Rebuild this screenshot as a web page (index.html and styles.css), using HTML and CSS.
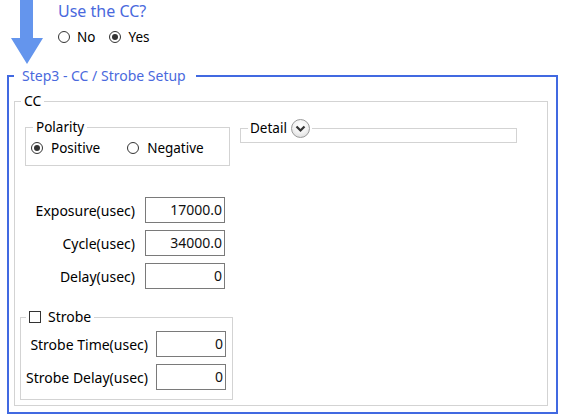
FILE: index.html
```html
<!DOCTYPE html>
<html>
<head>
<meta charset="utf-8">
<link rel="stylesheet" href="styles.css">
</head>
<body>
<div class="top">
  <svg class="arrow" width="32" height="64" viewBox="0 0 32 64">
    <polygon points="9,0 22,0 22,38 32,38 16,64 0,38 9,38" fill="#6495ED"/>
  </svg>
  <div class="question">
    <div class="q-title">Use the CC?</div>
    <div class="radios">
      <label class="opt"><span class="radio"></span>No</label>
      <label class="opt"><span class="radio on"></span>Yes</label>
    </div>
  </div>
</div>
<fieldset class="step">
  <legend class="step-legend">Step3 - CC / Strobe Setup</legend>
  <fieldset class="cc">
    <legend class="cc-legend">CC</legend>
    <div class="cc-body">
      <div class="cc-top">
        <fieldset class="polarity">
          <legend class="pol-legend">Polarity</legend>
          <div class="pol-body">
            <label class="opt"><span class="radio on"></span>Positive</label>
            <label class="opt neg"><span class="radio"></span>Negative</label>
          </div>
        </fieldset>
        <fieldset class="detail">
          <legend class="det-legend">Detail <span class="chev"><svg width="11" height="8" viewBox="0 0 11 8"><polyline points="1.5,1.5 5.5,5.5 9.5,1.5" fill="none" stroke="#333" stroke-width="2.2"/></svg></span></legend>
        </fieldset>
      </div>
      <div class="rows">
        <div class="row"><span class="lbl">Exposure(usec)</span><span class="field">17000.0</span></div>
        <div class="row"><span class="lbl">Cycle(usec)</span><span class="field">34000.0</span></div>
        <div class="row"><span class="lbl">Delay(usec)</span><span class="field">0</span></div>
      </div>
      <fieldset class="strobe">
        <legend class="str-legend"><span class="check"></span>Strobe</legend>
        <div class="str-body">
          <div class="srow"><span class="slbl">Strobe Time(usec)</span><span class="sfield">0</span></div>
          <div class="srow"><span class="slbl">Strobe Delay(usec)</span><span class="sfield">0</span></div>
        </div>
      </fieldset>
    </div>
  </fieldset>
</fieldset>
</body>
</html>
```
FILE: styles.css
```css
html, body {
  margin: 0;
  padding: 0;
  background: #fff;
}
body {
  font-family: "Noto Sans", "Open Sans", sans-serif;
  font-size: 14px;
  color: #000;
  width: 564px;
  height: 415px;
  overflow: hidden;
}
.top {
  display: flex;
  height: 67px;
}
.arrow {
  display: block;
  margin-left: 11px;
}
.question {
  margin-left: 15px;
}
.q-title {
  color: #4a69dd;
  font-size: 16px;
  line-height: 20px;
  margin-top: 1px;
}
.radios {
  display: flex;
  margin-top: 7px;
  font-size: 13.5px;
}
.opt {
  display: flex;
  align-items: center;
  line-height: 18px;
  margin-right: 14px;
}
.radio {
  width: 12px;
  height: 12px;
  box-sizing: border-box;
  border: 1px solid #333;
  border-radius: 50%;
  background: #fff;
  margin-right: 7px;
  position: relative;
  flex: none;
}
.radio.on::after {
  content: "";
  position: absolute;
  left: 2px;
  top: 2px;
  width: 6px;
  height: 6px;
  border-radius: 50%;
  background: #333;
}
fieldset {
  margin: 0;
  padding: 0;
  min-width: 0;
}
legend {
  padding: 0;
  line-height: 18px;
}
.step {
  margin: 0 6px 0 7px;
  border: 2px solid #4169E1;
  padding: 7px 8px 6px 5px;
}
.step-legend {
  color: #4a69dd;
  padding: 0 10px 0 8px;
  margin-left: 0;
}
.cc {
  border: 1px solid #d3d3d3;
}
.cc-legend {
  margin-left: 6px;
  padding: 0 3px;
}
.cc-body {
  padding: 8px 0 5px 0;
}
.cc-top {
  display: flex;
  align-items: flex-start;
  font-size: 13.5px;
}
.polarity {
  margin-left: 10px;
  width: 205px;
  box-sizing: border-box;
  border: 1px solid #d3d3d3;
}
.pol-legend {
  margin-left: 7px;
  padding: 0 3px;
}
.pol-body {
  display: flex;
  padding: 3px 0 8px 5px;
}
.pol-body .opt {
  margin-right: 0;
}
.pol-body .radio {
  margin-right: 8px;
}
.neg {
  margin-left: 27px;
}
.detail {
  flex: 1;
  margin-left: 10px;
  margin-right: 30px;
  border: 1px solid #d3d3d3;
  padding-bottom: 4px;
}
.det-legend {
  margin-left: 7px;
  padding: 0 2px;
  display: flex;
  align-items: center;
  line-height: 20px;
}
.chev {
  display: inline-flex;
  align-items: center;
  justify-content: center;
  width: 19px;
  height: 19px;
  box-sizing: border-box;
  border: 1px solid #9a9a9a;
  border-radius: 50%;
  background: radial-gradient(circle at 50% 35%, #ffffff 0%, #f2f2f2 50%, #d4d4d4 100%);
  margin-left: 4px;
}
.chev svg {
  display: block;
  margin-top: 1px;
}
.rows {
  margin-top: 31px;
  margin-left: 10px;
  display: flex;
  flex-direction: column;
  gap: 7px;
}
.row {
  display: flex;
  align-items: center;
}
.lbl {
  width: 110px;
  text-align: right;
  margin-right: 10px;
  white-space: nowrap;
}
.field, .sfield {
  height: 26px;
  box-sizing: border-box;
  border: 1px solid #7a7a7a;
  text-align: right;
  padding-right: 2px;
  line-height: 24px;
  color: #111;
}
.field {
  width: 80px;
}
.strobe {
  margin-top: 19px;
  margin-left: 5px;
  width: 213px;
  box-sizing: border-box;
  border: 1px solid #d3d3d3;
}
.str-legend {
  margin-left: 5px;
  padding: 0 3px;
  display: flex;
  align-items: center;
}
.check {
  width: 12px;
  height: 12px;
  box-sizing: border-box;
  border: 1px solid #333;
  background: #fff;
  margin-right: 7px;
}
.str-body {
  padding: 5px 6px 9px 0;
  display: flex;
  flex-direction: column;
  gap: 7px;
}
.srow {
  display: flex;
  justify-content: flex-end;
  align-items: center;
}
.slbl {
  margin-right: 8px;
  white-space: nowrap;
}
.sfield {
  width: 70px;
}
```
